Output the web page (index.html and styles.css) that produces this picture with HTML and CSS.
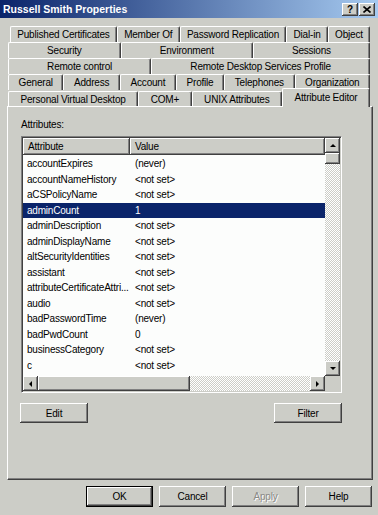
FILE: index.html
```html
<!DOCTYPE html>
<html lang="en">
<head>
    <meta charset="UTF-8">
    <meta name="viewport" content="width=device-width, initial-scale=1.0">
    <title>Russell Smith Properties</title>
    <link rel="stylesheet" href="styles.css">
</head>
<body>
    <div class="window">
        <div class="titlebar">
            <span class="title">Russell Smith Properties</span>
            <div class="title-buttons">
                <span class="cap-btn">?</span>
                <span class="cap-btn">
                    <svg width="8" height="7" viewBox="0 0 8 7"><path d="M0.5 0.5L7.5 6.5M7.5 0.5L0.5 6.5" stroke="#000" stroke-width="1.6"/></svg>
                </span>
            </div>
        </div>

        <div class="tabs">
            <div class="tab-row first">
                <div class="tab">Published Certificates</div>
                <div class="tab">Member Of</div>
                <div class="tab">Password Replication</div>
                <div class="tab">Dial-in</div>
                <div class="tab">Object</div>
            </div>
            <div class="tab-row">
                <div class="tab">Security</div>
                <div class="tab">Environment</div>
                <div class="tab">Sessions</div>
            </div>
            <div class="tab-row">
                <div class="tab">Remote control</div>
                <div class="tab">Remote Desktop Services Profile</div>
            </div>
            <div class="tab-row">
                <div class="tab">General</div>
                <div class="tab">Address</div>
                <div class="tab">Account</div>
                <div class="tab">Profile</div>
                <div class="tab">Telephones</div>
                <div class="tab">Organization</div>
            </div>
            <div class="tab-row front">
                <div class="tab">Personal Virtual Desktop</div>
                <div class="tab">COM+</div>
                <div class="tab">UNIX Attributes</div>
                <div class="tab active">Attribute Editor</div>
            </div>
        </div>

        <div class="panel">
            <div class="label">Attributes:</div>
            <div class="listbox">
                <div class="list-main">
                    <div class="list-header">
                        <div class="col-h col-name">Attribute</div>
                        <div class="col-h col-value">Value</div>
                    </div>
                    <div class="list-rows">
                        <div class="list-row"><span class="col-name">accountExpires</span><span class="col-value">(never)</span></div>
                        <div class="list-row"><span class="col-name">accountNameHistory</span><span class="col-value">&lt;not set&gt;</span></div>
                        <div class="list-row"><span class="col-name">aCSPolicyName</span><span class="col-value">&lt;not set&gt;</span></div>
                        <div class="list-row selected"><span class="col-name">adminCount</span><span class="col-value">1</span></div>
                        <div class="list-row"><span class="col-name">adminDescription</span><span class="col-value">&lt;not set&gt;</span></div>
                        <div class="list-row"><span class="col-name">adminDisplayName</span><span class="col-value">&lt;not set&gt;</span></div>
                        <div class="list-row"><span class="col-name">altSecurityIdentities</span><span class="col-value">&lt;not set&gt;</span></div>
                        <div class="list-row"><span class="col-name">assistant</span><span class="col-value">&lt;not set&gt;</span></div>
                        <div class="list-row"><span class="col-name">attributeCertificateAttri...</span><span class="col-value">&lt;not set&gt;</span></div>
                        <div class="list-row"><span class="col-name">audio</span><span class="col-value">&lt;not set&gt;</span></div>
                        <div class="list-row"><span class="col-name">badPasswordTime</span><span class="col-value">(never)</span></div>
                        <div class="list-row"><span class="col-name">badPwdCount</span><span class="col-value">0</span></div>
                        <div class="list-row"><span class="col-name">businessCategory</span><span class="col-value">&lt;not set&gt;</span></div>
                        <div class="list-row"><span class="col-name">c</span><span class="col-value">&lt;not set&gt;</span></div>
                    </div>
                </div>
                <div class="vscroll">
                    <span class="sb-btn"><i class="arrow up"></i></span>
                    <span class="thumb-v"></span>
                    <span class="track"></span>
                    <span class="sb-btn"><i class="arrow down"></i></span>
                </div>
                <div class="hscroll">
                    <span class="sb-btn"><i class="arrow left"></i></span>
                    <span class="thumb-h"></span>
                    <span class="track"></span>
                    <span class="sb-btn"><i class="arrow right"></i></span>
                </div>
                <div class="corner"></div>
            </div>
            <div class="panel-actions">
                <button class="btn small">Edit</button>
                <button class="btn small">Filter</button>
            </div>
        </div>

        <div class="footer">
            <button class="btn default">OK</button>
            <button class="btn">Cancel</button>
            <button class="btn" disabled>Apply</button>
            <button class="btn">Help</button>
        </div>
    </div>
</body>
</html>
```

FILE: styles.css
```css
* {
    box-sizing: border-box;
}
body {
    margin: 0;
    background: #cccdc7;
    font-family: "Liberation Sans", Arial, sans-serif;
    font-size: 10px;
    letter-spacing: -0.2px;
    color: #000;
}
.window {
    width: 378px;
    height: 515px;
    overflow: hidden;
}
.titlebar {
    height: 18px;
    padding: 0 3px;
    background: linear-gradient(to right, #0a246a, #a6caf0);
    display: flex;
    align-items: center;
    justify-content: space-between;
}
.title {
    color: #fff;
    font-weight: bold;
    font-size: 10.5px;
    letter-spacing: 0;
}
.title-buttons {
    display: flex;
    gap: 1px;
}
.cap-btn {
    width: 16px;
    height: 13px;
    background: #cccdc7;
    box-shadow: inset -1px -1px #404040, inset 1px 1px #fff, inset -2px -2px #808080;
    display: flex;
    align-items: center;
    justify-content: center;
    font-weight: bold;
    font-size: 10px;
    letter-spacing: 0;
}

/* tab strip */
.tabs {
    padding-top: 8px;
}
.tab-row {
    display: flex;
    height: 16px;
    margin: 0 8px;
}
.tab-row.first {
    margin-left: 10px;
}
.tab {
    flex: 1 1 auto;
    display: flex;
    align-items: center;
    justify-content: center;
    white-space: nowrap;
    background: #cccdc7;
    border-top: 1px solid #fff;
    border-left: 1px solid #fff;
    border-right: 1px solid #404040;
    border-radius: 2px 2px 0 0;
    box-shadow: inset -1px 0 #808080;
}
.tab-row.front {
    align-items: flex-end;
    position: relative;
    z-index: 1;
}
.tab-row.front .tab {
    height: 15px;
}
.tab-row.front .tab.active {
    height: 19px;
    margin-bottom: -1px;
    padding-bottom: 2px;
}

/* page */
.panel {
    height: 374px;
    margin: 0 5px 0 7px;
    padding: 12px 30px 0 12px;
    border: 1px solid;
    border-color: #fff #404040 #404040 #fff;
    box-shadow: inset -1px -1px #808080;
}
.label {
    line-height: 12px;
    margin-bottom: 5px;
    padding-left: 1px;
}
.listbox {
    margin: 0 0 0 1px;
    height: 257px;
    padding: 1px;
    display: grid;
    grid-template-columns: 1fr 15px;
    grid-template-rows: 1fr 15px;
    background: #fff;
    border: 1px solid;
    border-color: #808080 #fff #fff #808080;
    box-shadow: inset 1px 1px #404040, inset -1px -1px #cccdc7;
}
.list-main {
    min-height: 0;
    overflow: hidden;
    display: flex;
    flex-direction: column;
    background: #fcfdfc;
}
.list-header {
    display: flex;
    height: 17px;
    flex: none;
}
.col-h {
    display: flex;
    align-items: center;
    padding-left: 5px;
    background: #cccdc7;
    box-shadow: inset -1px -1px #404040, inset 1px 1px #fff, inset -2px -2px #808080;
}
.list-header .col-name {
    width: 107px;
}
.list-header .col-value {
    flex: 1;
}
.list-rows {
    padding-top: 1px;
}
.list-row {
    display: flex;
    height: 15.5px;
    line-height: 15.5px;
    white-space: nowrap;
}
.list-row .col-name {
    width: 107px;
    padding: 0 2px 0 4px;
    overflow: hidden;
}
.list-row .col-value {
    padding-left: 5px;
}
.list-row.selected {
    background: #0a246a;
    color: #fff;
}

/* scroll bars */
.vscroll,
.hscroll {
    display: flex;
    background: repeating-conic-gradient(#fff 0 25%, #cccdc7 0 50%) 0 0 / 2px 2px;
}
.vscroll {
    flex-direction: column;
}
.track {
    flex: 1;
}
.sb-btn,
.thumb-v,
.thumb-h {
    background: #cccdc7;
    box-shadow: inset -1px -1px #404040, inset 1px 1px #fff, inset -2px -2px #808080;
}
.sb-btn {
    width: 15px;
    height: 15px;
    flex: none;
    display: flex;
    align-items: center;
    justify-content: center;
}
.thumb-v {
    height: 11px;
}
.thumb-h {
    width: 152px;
}
.corner {
    background: #cccdc7;
}
.arrow {
    width: 0;
    height: 0;
    border: 3px solid transparent;
}
.arrow.up {
    border-bottom-color: #000;
    border-top-width: 0;
}
.arrow.down {
    border-top-color: #000;
    border-bottom-width: 0;
}
.arrow.left {
    border-right-color: #000;
    border-left-width: 0;
}
.arrow.right {
    border-left-color: #000;
    border-right-width: 0;
}

/* buttons */
.btn {
    width: 67px;
    height: 21px;
    padding: 0;
    border: none;
    font: inherit;
    letter-spacing: inherit;
    color: #000;
    background: #cccdc7;
    box-shadow: inset -1px -1px #404040, inset 1px 1px #fff, inset -2px -2px #808080;
}
.btn.small {
    width: 68px;
    height: 20px;
}
.btn.default {
    border: 1px solid #000;
}
.btn:disabled {
    color: #8a8a86;
    text-shadow: 1px 1px #fff;
}
.panel-actions {
    display: flex;
    justify-content: space-between;
    margin-top: 10px;
}
.footer {
    display: flex;
    justify-content: flex-end;
    gap: 6px;
    padding: 6px 6px 0 0;
}
```
